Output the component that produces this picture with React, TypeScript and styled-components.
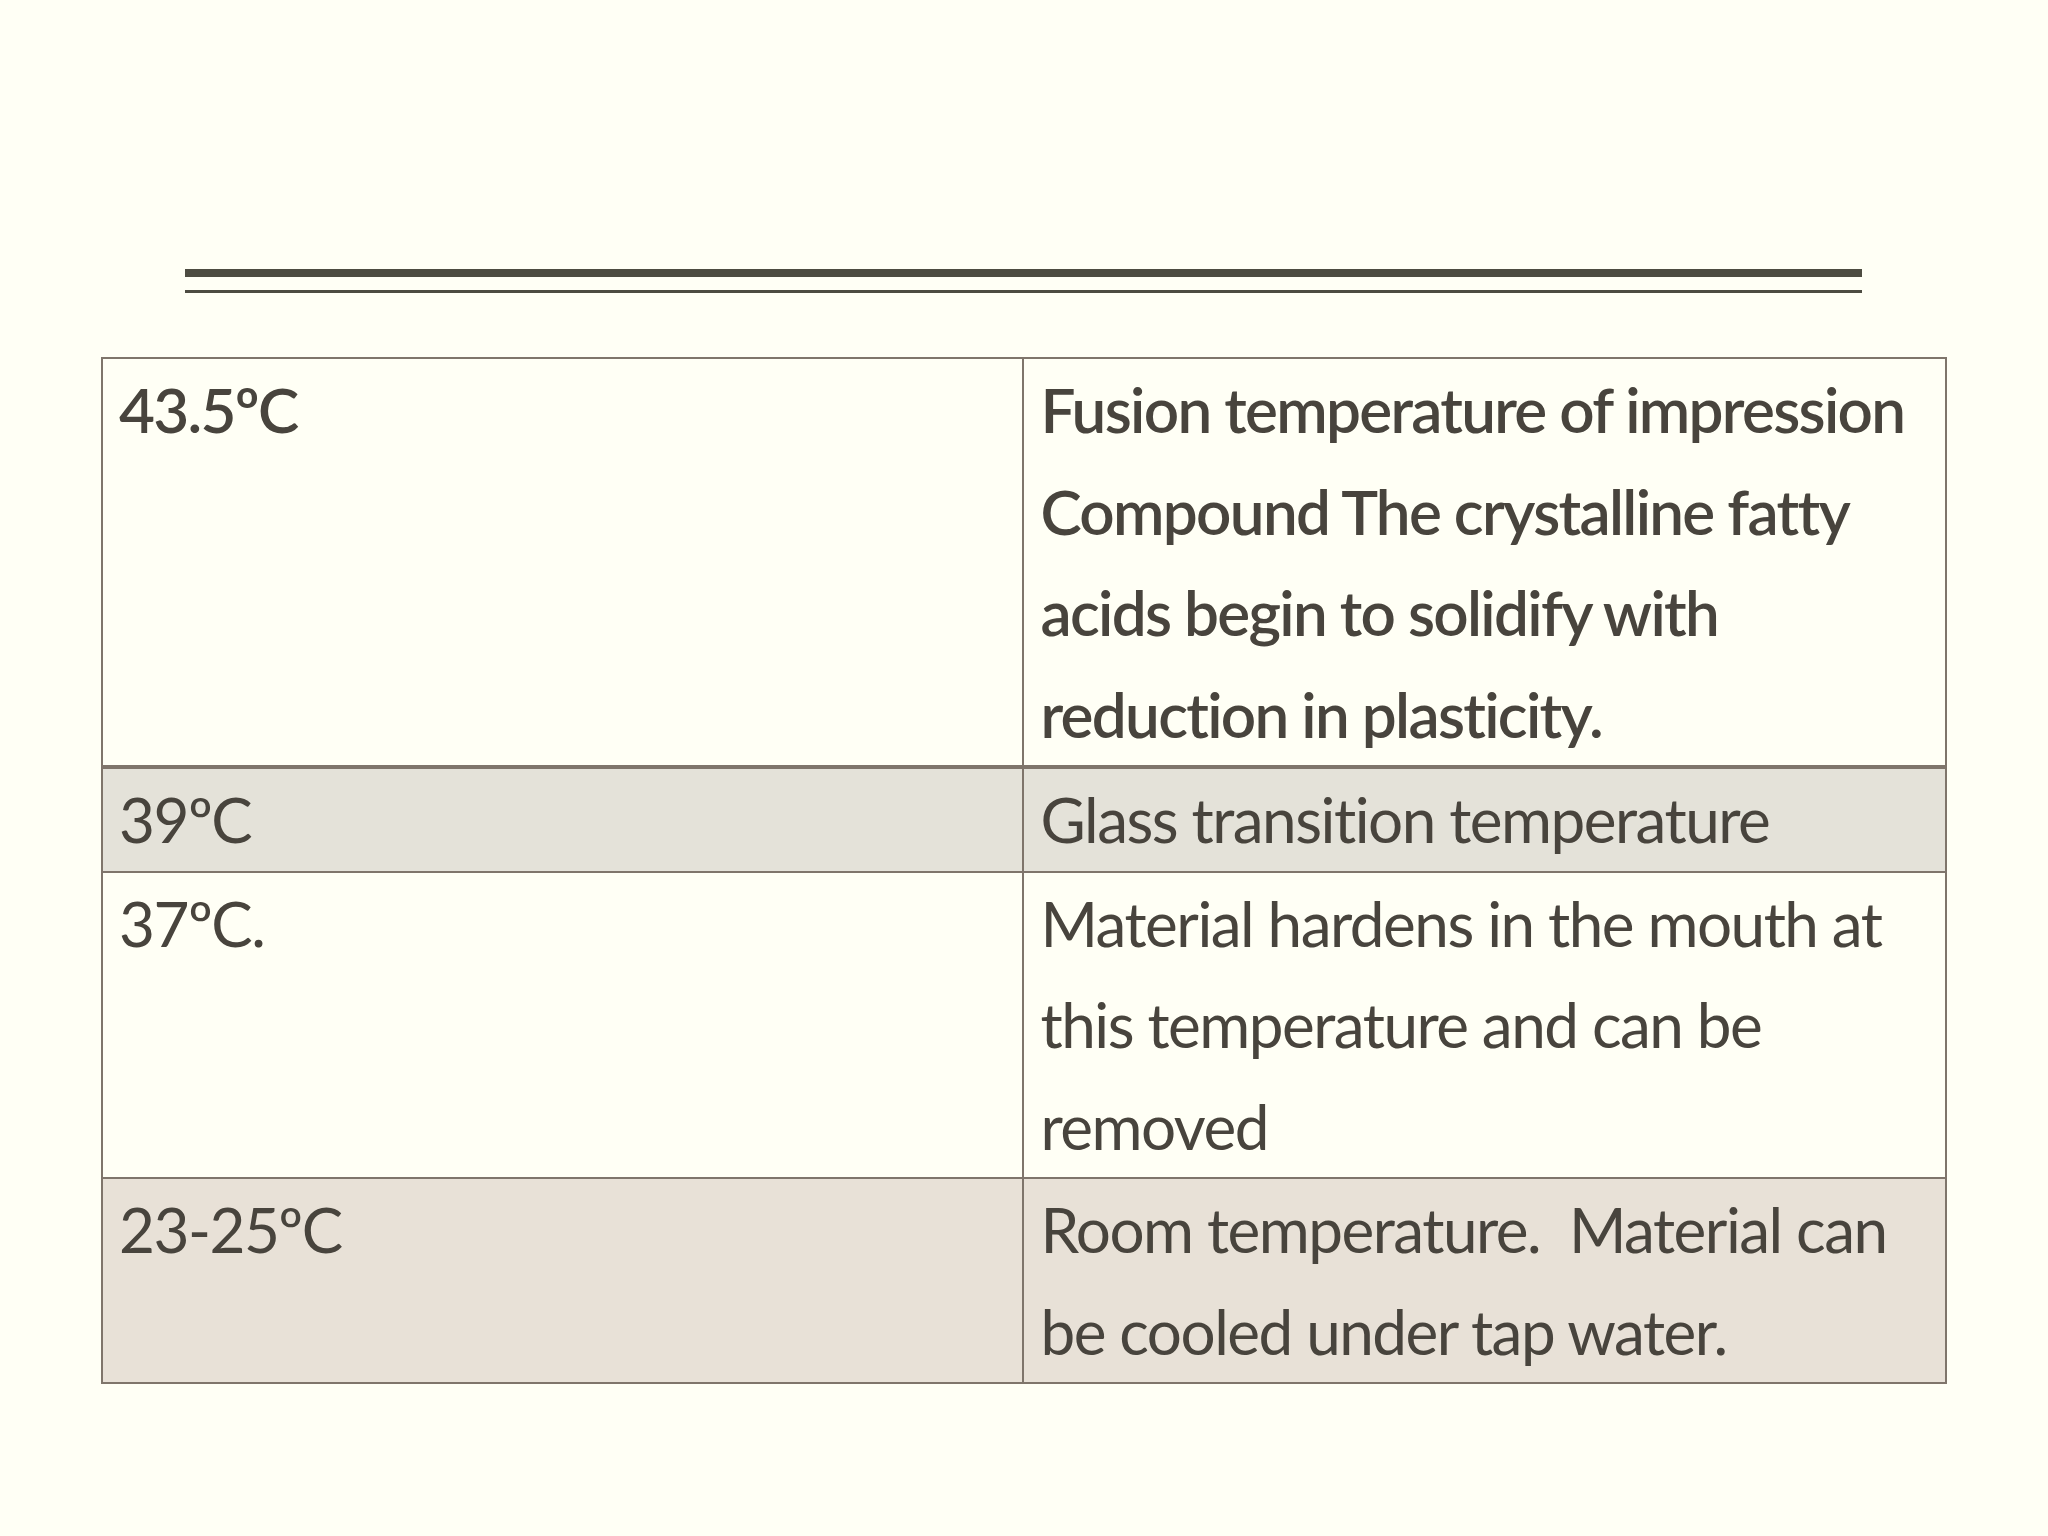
import React from 'react';
import styled, { createGlobalStyle } from 'styled-components';

const GlobalStyle = createGlobalStyle`
  html, body {
    margin: 0;
    padding: 0;
    background: #fffff5;
  }
`;

const Slide = styled.div`
  width: 2048px;
  height: 1536px;
  background: #fffff5;
  box-sizing: border-box;
  padding-top: 269px;
  display: flex;
  flex-direction: column;
  font-family: Lato, 'Open Sans', sans-serif;
  font-variant-ligatures: none;
  color: #48443d;
`;

const TitleRule = styled.div`
  margin: 0 186px 0 185px;
  height: 13px;
  border-top: 8px solid #4d4c41;
  border-bottom: 3px solid #4d4c41;
`;

const Table = styled.table`
  margin: 64px 0 0 101px;
  width: 1846px;
  border-collapse: collapse;
  table-layout: fixed;
  border: 2.5px solid #7f756b;
`;

const Row = styled.tr<{ $shade?: string; $heavy?: boolean }>`
  background: ${({ $shade }) => $shade ?? '#fffff5'};
  border-bottom: ${({ $heavy }) => ($heavy ? '4px' : '2.5px')} solid #7f756b;
  font-weight: ${({ $heavy }) => ($heavy ? 600 : 400)};
  letter-spacing: ${({ $heavy }) => ($heavy ? '-1.7px' : '-1.5px')};
`;

const Cell = styled.td<{ $wide?: boolean }>`
  width: ${({ $wide }) => ($wide ? '921px' : '920px')};
  padding: 0 14px 0 16px;
  vertical-align: top;
  font-size: 62px;
  line-height: 101.5px;
  border-right: 2.5px solid #7f756b;
  box-sizing: border-box;
`;

interface Entry {
  temp: string;
  note: string;
  shade?: string;
  heavy?: boolean;
}

const entries: Entry[] = [
  {
    temp: '43.5ºC',
    note: 'Fusion temperature of impression Compound The crystalline fatty acids begin to solidify with reduction in plasticity.',
    heavy: true,
  },
  { temp: '39ºC', note: 'Glass transition temperature', shade: '#e4e2d9' },
  { temp: '37ºC.', note: 'Material hardens in the mouth at this temperature and can be removed' },
  {
    temp: '23-25ºC',
    note: 'Room temperature.\u00a0 Material can be cooled under tap water.',
    shade: '#e8e1d7',
  },
];

const App: React.FC = () => {
  return (
    <>
      <GlobalStyle />
      <Slide>
        <TitleRule />
        <Table>
          <tbody>
            {entries.map((e) => (
              <Row key={e.temp} $shade={e.shade} $heavy={e.heavy}>
                <Cell>{e.temp}</Cell>
                <Cell $wide>{e.note}</Cell>
              </Row>
            ))}
          </tbody>
        </Table>
      </Slide>
    </>
  );
};

export default App;
